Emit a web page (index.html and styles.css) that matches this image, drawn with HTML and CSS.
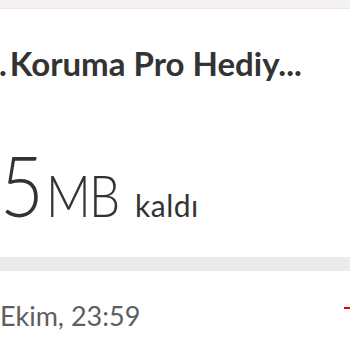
FILE: index.html
```html
<!DOCTYPE html>
<html lang="tr">
<head>
<meta charset="utf-8">
<link rel="stylesheet" href="styles.css">
</head>
<body>
<div class="topbar"></div>
<div class="title-row">
  <span class="title-cut">.</span><span class="title">Koruma Pro Hediy...</span>
</div>
<div class="amount">
  <span class="num">5</span><span class="unit">MB</span><span class="left">kaldı</span>
</div>
<div class="progress"></div>
<div class="date-row">
  <span class="date">Ekim, 23:59</span>
  <span class="mark"></span>
</div>
</body>
</html>
```
FILE: styles.css
```css
html, body {
  margin: 0;
  padding: 0;
  background: #fff;
  width: 350px;
  height: 350px;
  overflow: hidden;
}
.topbar {
  height: 8px;
  background: #f4f0f4;
  border-bottom: 1px solid #ebe7eb;
}
.title-row {
  display: flex;
  align-items: baseline;
  gap: 3px;
  margin-top: 34px;
  height: 42px;
  white-space: nowrap;
  font-family: Lato, "Liberation Sans", sans-serif;
  font-weight: 700;
  font-size: 33px;
  color: #333;
}
.title-cut {
  margin-left: -1px;
}
.amount {
  display: flex;
  align-items: baseline;
  margin-top: 59px;
  height: 82px;
  font-family: Lato, "Liberation Sans", sans-serif;
  font-weight: 300;
  color: #333;
}
.num {
  display: inline-block;
  font-size: 84px;
  line-height: 82px;
  transform: scaleX(0.9);
  transform-origin: left bottom;
  margin-right: -7px;
}
.unit {
  display: inline-block;
  font-size: 58px;
  margin-left: 4px;
  letter-spacing: -2px;
  transform: scaleX(0.85);
  transform-origin: left bottom;
  margin-right: -12px;
}
.left {
  font-size: 30px;
  font-weight: 400;
  margin-left: 16px;
  letter-spacing: 0.5px;
}
.progress {
  height: 14px;
  margin-top: 31px;
  background: #ebebeb;
}
.date-row {
  display: flex;
  justify-content: space-between;
  align-items: flex-start;
  margin-top: 30px;
}
.date {
  font-family: Lato, "Liberation Sans", sans-serif;
  font-size: 27px;
  color: #5e5e5e;
  line-height: 30px;
}
.mark {
  width: 6px;
  height: 2px;
  background: #e60000;
  margin-top: 6px;
}
```
